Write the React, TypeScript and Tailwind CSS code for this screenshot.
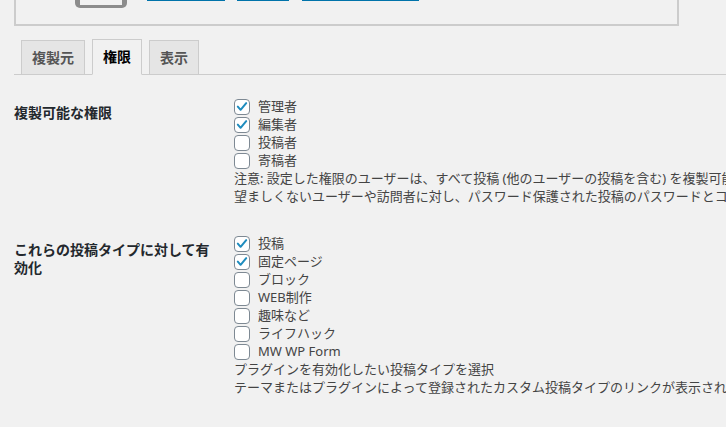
import React from 'react';

function CheckMark() {
  return (
    <svg viewBox="0 0 16 16" aria-hidden="true" className="h-4 w-4">
      <path
        d="M3.2 7.6 6.4 11.2 12.8 3.6"
        fill="none"
        stroke="#1e8cbe"
        strokeWidth="2.3"
        strokeLinecap="round"
        strokeLinejoin="round"
      />
    </svg>
  );
}

function CheckRow({ label, checked }: { label: string; checked?: boolean }) {
  return (
    <div className="flex h-[18px] items-center">
      <span className="flex h-4 w-4 shrink-0 items-center justify-center rounded-[4px] border border-[#7e8993] bg-white">
        {checked ? <CheckMark /> : null}
      </span>
      <span className="ml-2 whitespace-nowrap">{label}</span>
    </div>
  );
}

function Note({ children }: { children: React.ReactNode }) {
  return <div className="flex h-[18px] items-center whitespace-nowrap">{children}</div>;
}

function Tab({ label, active }: { label: string; active?: boolean }) {
  return (
    <div
      className={
        active
          ? '-mb-px ml-[7px] border border-[#ccc] border-b-[#f1f1f1] bg-[#f1f1f1] px-[10px] pt-[5px] pb-[6px] text-[14px] font-semibold leading-[23px] text-black'
          : 'ml-[7px] border border-b-0 border-[#ccc] bg-[#e5e5e5] px-[10px] py-[5px] text-[14px] font-semibold leading-[23px] text-[#555]'
      }
    >
      {label}
    </div>
  );
}

const roles = [
  { label: '管理者', checked: true },
  { label: '編集者', checked: true },
  { label: '投稿者' },
  { label: '寄稿者' },
];

const postTypes = [
  { label: '投稿', checked: true },
  { label: '固定ページ', checked: true },
  { label: 'ブロック' },
  { label: 'WEB制作' },
  { label: '趣味など' },
  { label: 'ライフハック' },
  { label: 'MW WP Form' },
];

export default function App() {
  return (
    <div className='h-[427px] w-[726px] overflow-hidden bg-[#f1f1f1] pl-[14px] font-["Noto_Sans","Noto_Sans_CJK_JP",sans-serif] text-[13px] text-[#444]'>
      {/* clipped box from the section above */}
      <div className="flex h-[26px] w-[665px] items-start border-2 border-t-0 border-[#ccc]">
        <div className="ml-[59px] h-[8px] w-[52px] rounded-b-[5px] border-x-[5px] border-b-[3px] border-[#8c8c8c]" />
        <div className="ml-[20px] h-px w-[78px] bg-[#0073aa]" />
        <div className="ml-[12px] h-px w-[52px] bg-[#0073aa]" />
        <div className="ml-[13px] h-px w-[117px] bg-[#0073aa]" />
      </div>

      <div className="mt-[13px] flex items-end border-b border-[#ccc]">
        <Tab label="複製元" />
        <Tab label="権限" active />
        <Tab label="表示" />
      </div>

      <div className="mt-[9px]">
        <div className="flex">
          <div className="w-[210px] shrink-0 pt-5 pr-[10px] text-[14px] font-semibold leading-[18px] text-[#23282d]">
            複製可能な権限
          </div>
          <div className="pt-[14px] pb-[15px] pl-[10px]">
            {roles.map((r) => (
              <CheckRow key={r.label} label={r.label} checked={r.checked} />
            ))}
            <Note>注意: 設定した権限のユーザーは、すべて投稿 (他のユーザーの投稿を含む) を複製可能になります。</Note>
            <Note>望ましくないユーザーや訪問者に対し、パスワード保護された投稿のパスワードとコンテンツを公開してしまう可能性があります。</Note>
          </div>
        </div>

        <div className="flex">
          <div className="w-[210px] shrink-0 pt-5 pr-[10px] text-[14px] font-semibold leading-[18px] text-[#23282d]">
            これらの投稿タイプに対して有効化
          </div>
          <div className="pt-[14px] pb-[15px] pl-[10px]">
            {postTypes.map((p) => (
              <CheckRow key={p.label} label={p.label} checked={p.checked} />
            ))}
            <Note>プラグインを有効化したい投稿タイプを選択</Note>
            <Note>テーマまたはプラグインによって登録されたカスタム投稿タイプのリンクが表示されるかどうかは、テーマやプラグインに依存します。</Note>
          </div>
        </div>
      </div>
    </div>
  );
}
